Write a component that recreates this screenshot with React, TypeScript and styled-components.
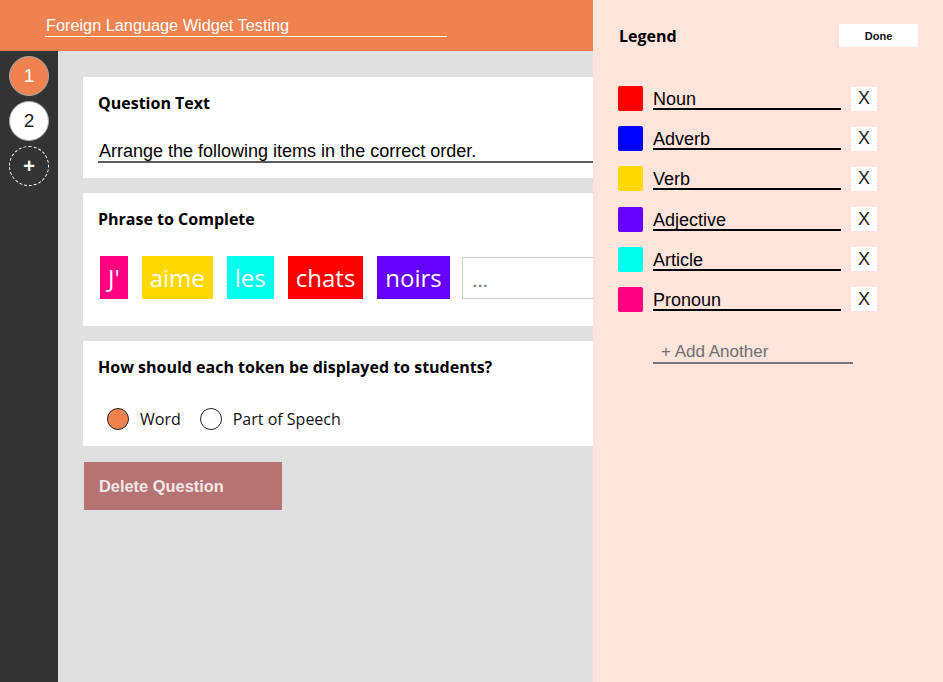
import React from "react";
import styled, { createGlobalStyle } from "styled-components";

const Global = createGlobalStyle`
  html, body { margin: 0; padding: 0; }
  body { width: 943px; height: 682px; overflow: hidden; font-family: "Open Sans", sans-serif; }
  * { box-sizing: border-box; }
`;

const Page = styled.div`
  position: relative;
  width: 943px;
  height: 682px;
  display: grid;
  grid-template-rows: 51px 1fr;
  grid-template-columns: 58px 1fr;
  background: #e0e0e0;
  overflow: hidden;
`;

const Header = styled.header`
  grid-column: 1 / 3;
  background: #f0824f;
  padding: 11px 0 0 45px;
`;

const TitleInput = styled.div`
  width: 402px;
  height: 26px;
  border-bottom: 1px solid #fff;
  color: #fff;
  font-family: "Liberation Sans", Arial, sans-serif;
  font-size: 16.3px;
  line-height: 22px;
  padding: 3px 0 0 1px;
`;

const Sidebar = styled.nav`
  background: #333333;
  display: flex;
  flex-direction: column;
  align-items: center;
  gap: 5px;
  padding-top: 5px;
`;

const Bubble = styled.div<{ $variant: "active" | "idle" | "add" }>`
  width: 40px;
  height: 40px;
  border-radius: 50%;
  display: flex;
  align-items: center;
  justify-content: center;
  font-family: "Liberation Sans", Arial, sans-serif;
  font-size: ${(p) => (p.$variant === "add" ? "20px" : "19px")};
  font-weight: ${(p) => (p.$variant === "add" ? 700 : 400)};
  background: ${(p) =>
    p.$variant === "active" ? "#f0824f" : p.$variant === "idle" ? "#fff" : "transparent"};
  color: ${(p) => (p.$variant === "idle" ? "#222" : "#fff")};
  border: ${(p) =>
    p.$variant === "add" ? "1px dashed #fff" : "1px solid #aaa"};
`;

const Main = styled.main`
  padding: 26px 0 0 25px;
  display: flex;
  flex-direction: column;
  gap: 15px;
`;

const Card = styled.section<{ $pb: number }>`
  background: #fff;
  width: 835px;
  padding: 16px 0 ${(p) => p.$pb}px 15px;
`;

const CardTitle = styled.h2`
  margin: 0;
  font-family: "Open Sans", sans-serif;
  font-weight: 700;
  font-size: 16px;
  line-height: 20px;
  color: #000;
`;

const QuestionInput = styled.div`
  margin-top: 22px;
  height: 28px;
  border-bottom: 2px solid #5a5a5a;
  font-family: "Liberation Sans", Arial, sans-serif;
  font-size: 18px;
  line-height: 26px;
  color: #000;
  padding: 3px 0 0 1px;
`;

const TokenRow = styled.div`
  margin-top: 27px;
  display: flex;
  gap: 14px;
  padding-left: 2px;
  height: 43px;
`;

const Token = styled.span<{ $bg: string }>`
  background: ${(p) => p.$bg};
  color: #fff;
  height: 43px;
  padding: 0 8px;
  display: flex;
  align-items: center;
  font-family: "Open Sans", sans-serif;
  font-size: 24px;
  line-height: 1;
`;

const TokenInput = styled.div`
  flex: 1;
  margin: 1px 0 0 -2px;
  height: 42px;
  border: 1px solid #cccccc;
  display: flex;
  align-items: flex-end;
  padding: 0 0 8px 10px;
  color: #777;
  font-family: "Liberation Sans", Arial, sans-serif;
  font-size: 15px;
  font-weight: 700;
  letter-spacing: 1px;
`;

const RadioRow = styled.div`
  margin-top: 30px;
  height: 24px;
  display: flex;
  align-items: center;
  padding-left: 9px;
`;

const RadioOption = styled.label`
  display: flex;
  align-items: center;
  gap: 11px;
  margin-right: 19px;
  font-family: "Open Sans", sans-serif;
  font-size: 16px;
  color: #111;
`;

const RadioDot = styled.span<{ $on: boolean }>`
  width: 22px;
  height: 22px;
  border-radius: 50%;
  border: 1px solid #222;
  background: ${(p) => (p.$on ? "#f0824f" : "#fff")};
`;

const DeleteButton = styled.button`
  margin: 1px 0 0 1px;
  width: 198px;
  height: 48px;
  background: #b57373;
  border: none;
  color: #f3e6e6;
  font-family: "Liberation Sans", Arial, sans-serif;
  font-weight: 700;
  font-size: 16.4px;
  text-align: left;
  padding: 0 0 0 15px;
`;

const Drawer = styled.aside`
  position: absolute;
  top: 0;
  right: 0;
  width: 350px;
  height: 682px;
  background: #fee4da;
  padding: 24px 25px 0 25px;
`;

const DrawerHead = styled.div`
  display: flex;
  justify-content: space-between;
  align-items: center;
  height: 23px;
`;

const DrawerTitle = styled.h3`
  margin: 0 0 0 1px;
  font-family: "Open Sans", sans-serif;
  font-weight: 700;
  font-size: 16px;
  color: #000;
`;

const DoneButton = styled.button`
  width: 79px;
  height: 23px;
  background: #fff;
  border: none;
  font-family: "Liberation Sans", Arial, sans-serif;
  font-weight: 700;
  font-size: 11px;
  color: #111;
  padding: 0;
`;

const LegendList = styled.div`
  margin-top: 39px;
  display: flex;
  flex-direction: column;
  gap: 15.2px;
`;

const LegendRow = styled.div`
  display: flex;
  align-items: center;
  height: 25px;
`;

const Swatch = styled.span<{ $bg: string }>`
  width: 25px;
  height: 25px;
  border-radius: 2px;
  background: ${(p) => p.$bg};
  margin-right: 10px;
`;

const LegendInput = styled.div`
  width: 188px;
  height: 24px;
  border-bottom: 2px solid #000;
  font-family: "Liberation Sans", Arial, sans-serif;
  font-size: 18px;
  line-height: 22px;
  color: #000;
  padding: 2px 0 0 0;
  align-self: flex-start;
`;

const RemoveButton = styled.button`
  margin-left: 10px;
  width: 26px;
  height: 24px;
  background: #fff;
  border: none;
  padding: 0;
  font-family: "Liberation Sans", Arial, sans-serif;
  font-size: 18px;
  color: #222;
`;

const AddAnother = styled.div`
  margin: 23px 0 0 35px;
  width: 200px;
  height: 29px;
  border-bottom: 2px solid #777;
  font-family: "Liberation Sans", Arial, sans-serif;
  font-size: 17px;
  line-height: 28px;
  color: #707070;
  padding: 3px 0 0 8px;
`;

const tokens = [
  { text: "J'", bg: "#ff0080" },
  { text: "aime", bg: "#ffd800" },
  { text: "les", bg: "#00ffee" },
  { text: "chats", bg: "#ff0000" },
  { text: "noirs", bg: "#6600ff" },
];

const legend = [
  { label: "Noun", color: "#ff0000" },
  { label: "Adverb", color: "#0000ff" },
  { label: "Verb", color: "#ffd800" },
  { label: "Adjective", color: "#6600ff" },
  { label: "Article", color: "#00ffee" },
  { label: "Pronoun", color: "#ff0080" },
];

export default function App() {
  return (
    <>
      <Global />
      <Page>
        <Header>
          <TitleInput>Foreign Language Widget Testing</TitleInput>
        </Header>
        <Sidebar>
          <Bubble $variant="active">1</Bubble>
          <Bubble $variant="idle">2</Bubble>
          <Bubble $variant="add">+</Bubble>
        </Sidebar>
        <Main>
          <Card $pb={15}>
            <CardTitle>Question Text</CardTitle>
            <QuestionInput>Arrange the following items in the correct order.</QuestionInput>
          </Card>
          <Card $pb={27}>
            <CardTitle>Phrase to Complete</CardTitle>
            <TokenRow>
              {tokens.map((t) => (
                <Token key={t.text} $bg={t.bg}>
                  {t.text}
                </Token>
              ))}
              <TokenInput>...</TokenInput>
            </TokenRow>
          </Card>
          <Card $pb={15}>
            <CardTitle>How should each token be displayed to students?</CardTitle>
            <RadioRow>
              <RadioOption>
                <RadioDot $on={true} />
                Word
              </RadioOption>
              <RadioOption>
                <RadioDot $on={false} />
                Part of Speech
              </RadioOption>
            </RadioRow>
          </Card>
          <DeleteButton>Delete Question</DeleteButton>
        </Main>
        <Drawer>
          <DrawerHead>
            <DrawerTitle>Legend</DrawerTitle>
            <DoneButton>Done</DoneButton>
          </DrawerHead>
          <LegendList>
            {legend.map((l) => (
              <LegendRow key={l.label}>
                <Swatch $bg={l.color} />
                <LegendInput>{l.label}</LegendInput>
                <RemoveButton>X</RemoveButton>
              </LegendRow>
            ))}
          </LegendList>
          <AddAnother>+ Add Another</AddAnother>
        </Drawer>
      </Page>
    </>
  );
}
